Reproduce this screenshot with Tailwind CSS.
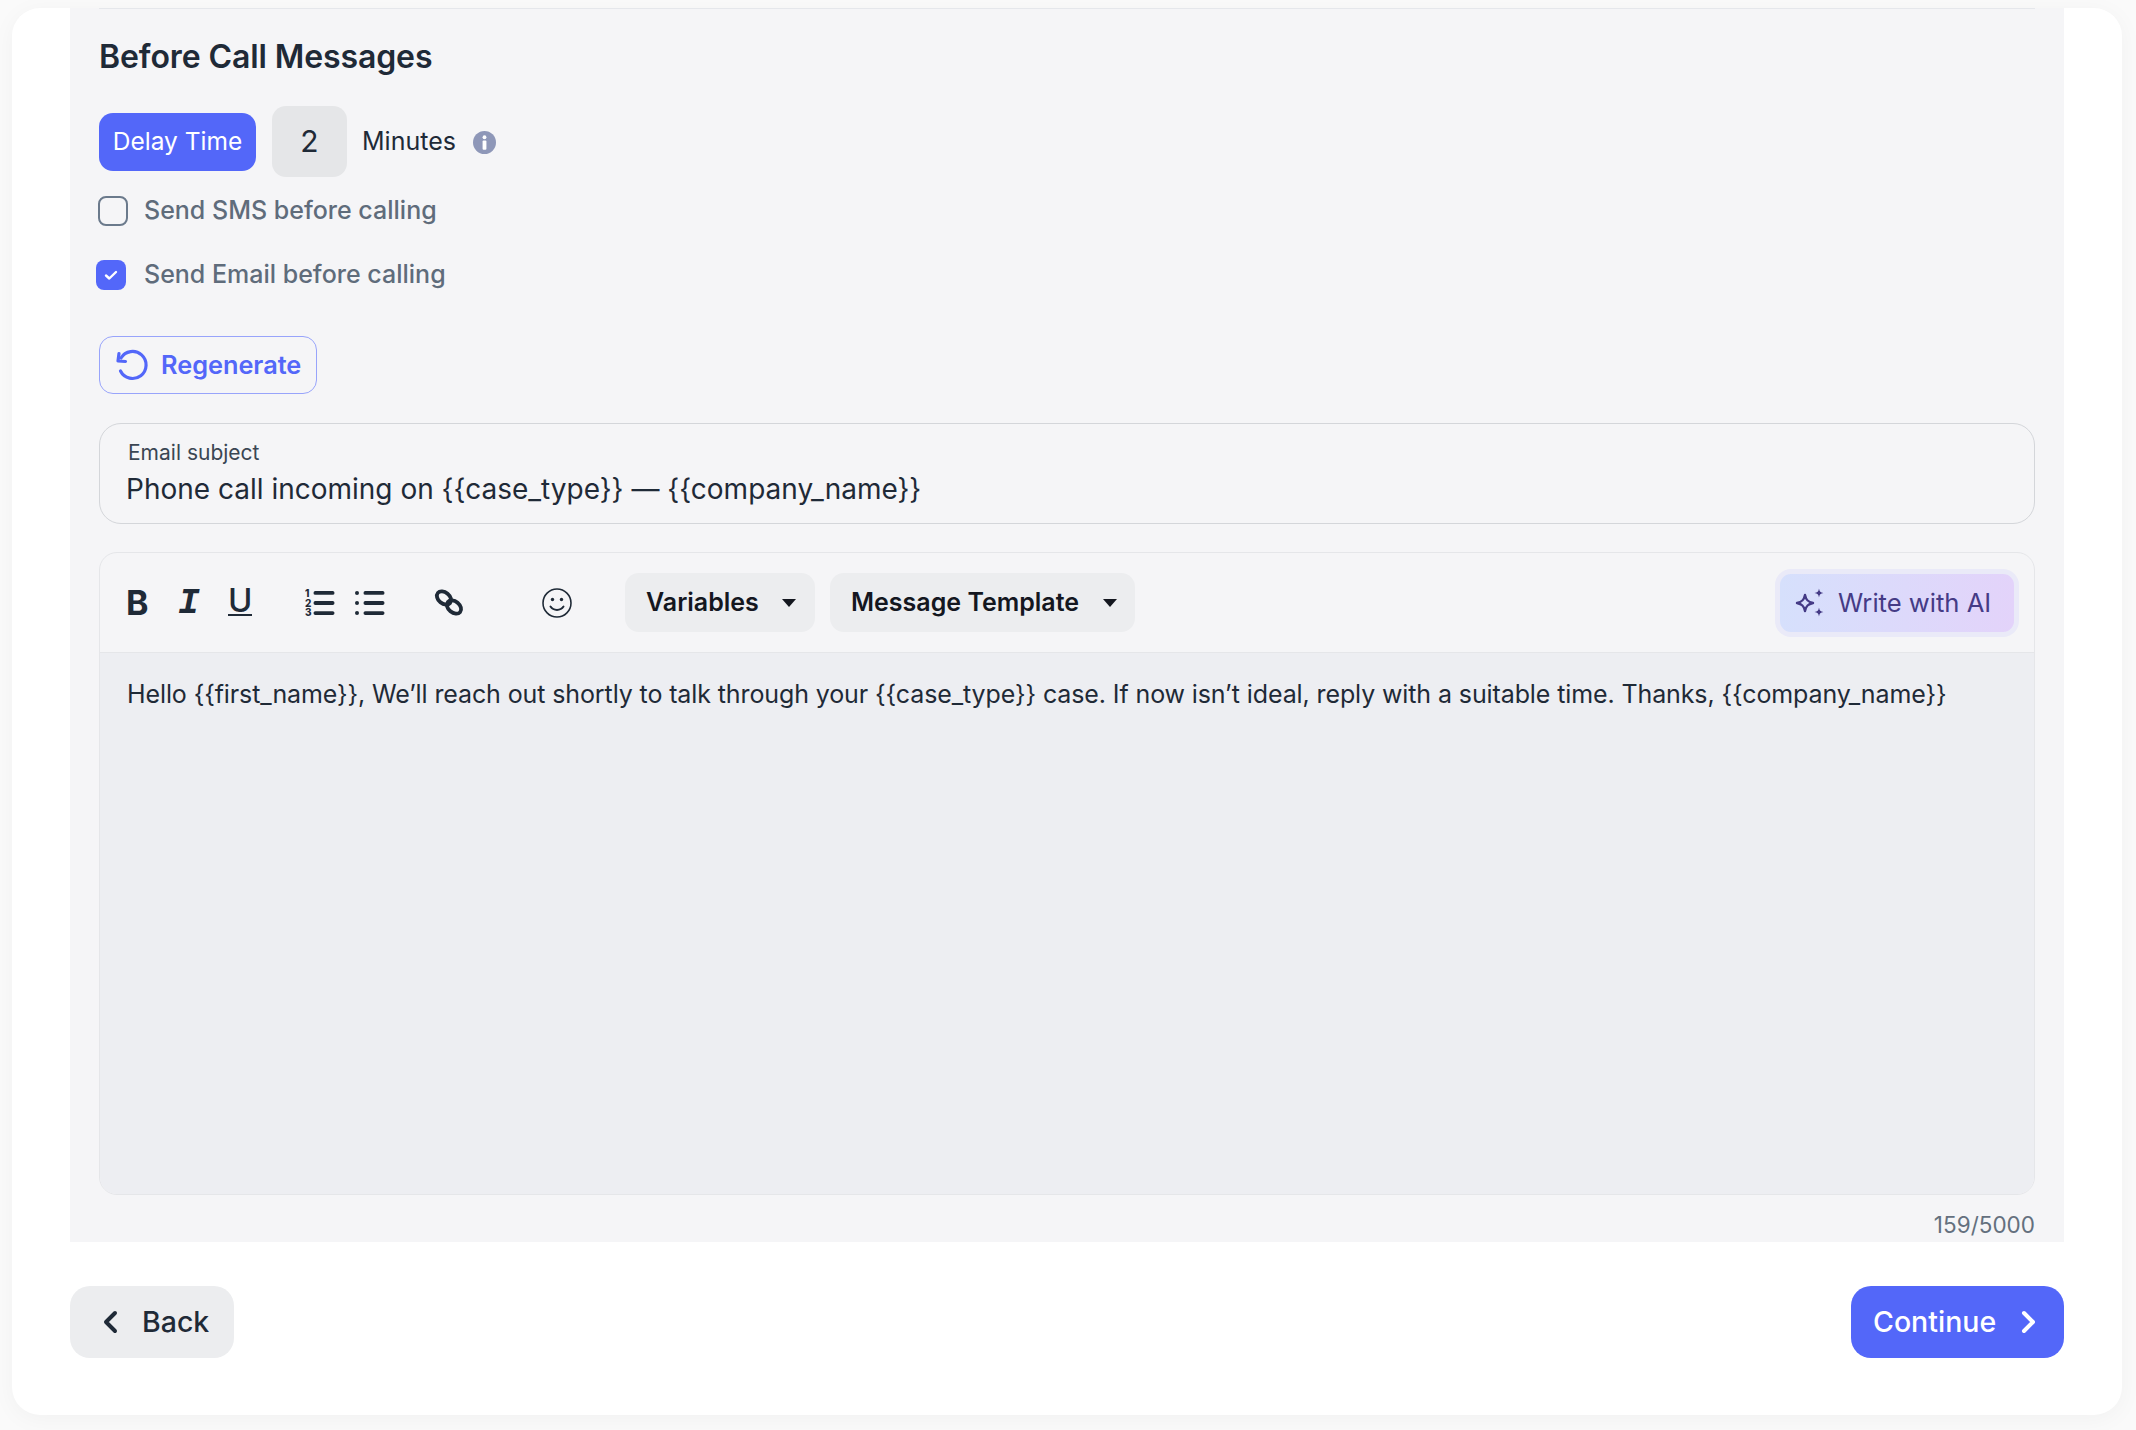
<!DOCTYPE html>
<html lang="en">
<head>
    <meta charset="UTF-8">
    <title>Before Call Messages</title>
    <script src="https://cdn.jsdelivr.net/npm/@tailwindcss/browser@4"></script>
</head>
<body class="bg-[#fafafa] h-[1430px] overflow-hidden pt-2 pl-3 font-['Inter',sans-serif]">
    <div class="w-[2110px] h-[1407px] bg-white rounded-[28px] shadow-[0_4px_24px_rgba(0,0,0,0.04)] overflow-hidden px-[58px] flex flex-col">
        <!-- panel -->
        <div class="h-[1234px] bg-[#f5f5f7] px-[29px]">
            <div class="border-t border-[#e5e7eb] h-full">
                <h2 class="mt-[30px] h-[36px] text-[32px] leading-[36px] font-semibold text-[#1f2a37] tracking-[-0.1px]">Before Call Messages</h2>

                <!-- delay row -->
                <div class="mt-[31px] flex items-center h-[71px]">
                    <div class="w-[157px] h-[58px] rounded-[14px] bg-[#5367f9] text-white text-[24.5px] flex items-center justify-center">Delay Time</div>
                    <div class="ml-[16px] w-[75px] h-[71px] rounded-[14px] bg-[#e5e6e8] text-[#1f2a37] text-[30px] flex items-center justify-center">2</div>
                    <span class="ml-[15px] text-[25px] text-[#1f2a37]">Minutes</span>
                    <svg class="ml-[17px] mt-[2px]" width="23" height="23" viewBox="0 0 24 24"><circle cx="12" cy="12" r="12" fill="#8e97b8"/><circle cx="12" cy="6.500" r="2" fill="#fff"/><rect x="10" y="10" width="4" height="9.500" rx="1" fill="#fff"/></svg>
                </div>

                <!-- checkboxes -->
                <div class="mt-[19px] flex items-center h-[29px]">
                    <div class="w-[30px] h-[30px] rounded-[8px] border-2 border-[#6b7a8c] -ml-px"></div>
                    <span class="ml-[16px] text-[25px] font-medium text-[#5f6c7b]">Send SMS before calling</span>
                </div>
                <div class="mt-[35px] flex items-center h-[29px]">
                    <div class="w-[30px] h-[30px] rounded-[8px] bg-[#5367f9] -ml-[3px] flex items-center justify-center">
                        <svg width="16" height="16" viewBox="0 0 16 16" fill="none" stroke="#fff" stroke-width="2.400" stroke-linecap="round" stroke-linejoin="round"><path d="M3 8.500l3.300 3L13 5"/></svg>
                    </div>
                    <span class="ml-[18px] text-[25px] font-medium text-[#5f6c7b]">Send Email before calling</span>
                </div>

                <!-- regenerate -->
                <button class="mt-[47px] w-[218px] h-[58px] rounded-[14px] border border-[#98a4fb] flex items-center pl-[15px] text-[#5367f9] text-[25.300px] font-semibold">
                    <svg width="34" height="34" viewBox="0 0 34 34" fill="none" stroke="#5367f9" stroke-width="3.200" stroke-linecap="round" stroke-linejoin="round"><path d="M6 10A13.500 13.500 0 1 1 5.500 23"/><path d="M4 5.500L3 13l7.500 .5"/></svg>
                    <span class="ml-[12px]">Regenerate</span>
                </button>

                <!-- subject -->
                <div class="mt-[29px] h-[101px] rounded-[22px] border border-[#d4d6da] pl-[26px] pt-[16px]">
                    <div class="text-[21px] leading-[26px] pl-[2px] text-[#3a4653]">Email subject</div>
                    <div class="text-[28px] leading-[38px] mt-[4px] text-[#1f2a37]">Phone call incoming on {{case_type}} — {{company_name}}</div>
                </div>

                <!-- editor -->
                <div class="mt-[28px] h-[643px] rounded-[18px] border border-[#e5e6e9] overflow-hidden flex flex-col">
                    <div class="h-[100px] shrink-0 border-b border-[#e5e6e9] flex items-center">
                        <span class="ml-[26px] w-[24px] text-[34px] font-bold leading-none text-[#1f2a37]">B</span>
                        <span class="ml-[28px] mt-[3px] w-[22px] text-[36px] font-bold italic leading-none text-[#1f2a37] font-['Liberation_Mono',monospace]">I</span>
                        <span class="ml-[28px] -mt-[3px] w-[24px] text-[33px] font-medium leading-[27px] text-center text-[#1f2a37] border-b-2 border-[#1f2a37]">U</span>
                        <svg class="ml-[53px]" width="30" height="30" viewBox="0 0 30 30" fill="#1f2a37" font-family="Inter" font-size="10" font-weight="800"><text x="0" y="9">1</text><text x="0" y="18.500">2</text><text x="0" y="28">3</text><rect x="8.500" y="3" width="21" height="3.800" rx="1.900"/><rect x="8.500" y="13.100" width="21" height="3.800" rx="1.900"/><rect x="8.500" y="23.200" width="21" height="3.800" rx="1.900"/></svg>
                        <svg class="ml-[20px]" width="30" height="30" viewBox="0 0 30 30" fill="#1f2a37"><circle cx="2" cy="4.900" r="2"/><circle cx="2" cy="15" r="2"/><circle cx="2" cy="25.100" r="2"/><rect x="8.500" y="3" width="21" height="3.800" rx="1.900"/><rect x="8.500" y="13.100" width="21" height="3.800" rx="1.900"/><rect x="8.500" y="23.200" width="21" height="3.800" rx="1.900"/></svg>
                        <svg class="ml-[49px]" width="30" height="30" viewBox="0 0 30 30" fill="none" stroke="#1f2a37" stroke-width="3.800"><ellipse cx="10" cy="10" rx="8" ry="5.600" transform="rotate(40 10 10)"/><ellipse cx="20" cy="19" rx="8" ry="5.600" transform="rotate(40 20 19)"/></svg>
                        <svg class="ml-[78px]" width="30" height="30" viewBox="0 0 30 30" fill="none" stroke="#1f2a37" stroke-width="1.600" stroke-linecap="round"><circle cx="15" cy="15" r="14"/><circle cx="10.500" cy="11.500" r="1.700" fill="#1f2a37" stroke="none"/><circle cx="19.500" cy="11.500" r="1.700" fill="#1f2a37" stroke="none"/><path d="M8.500 18.500c3 4.500 10 4.500 13 0" stroke-width="2"/></svg>
                        <button class="ml-[53px] w-[190px] h-[59px] rounded-[14px] bg-[#ecedef] flex items-center pl-[21px] text-[25px] font-semibold text-[#14171f]">
                            Variables
                            <svg class="ml-[23px]" width="14" height="8" viewBox="0 0 14 8" fill="#14171f"><path d="M0 0h14L7 8z"/></svg>
                        </button>
                        <button class="ml-[15px] w-[305px] h-[59px] rounded-[14px] bg-[#ecedef] flex items-center pl-[21px] text-[25px] font-semibold text-[#14171f]">
                            Message Template
                            <svg class="ml-[24px]" width="14" height="8" viewBox="0 0 14 8" fill="#14171f"><path d="M0 0h14L7 8z"/></svg>
                        </button>
                        <button class="ml-auto mr-[15px] w-[244px] h-[68px] rounded-[16px] border-[5px] border-[#eaeaf8] bg-[linear-gradient(90deg,#d6e0fc,#e3d3fa)] flex items-center pl-[15px] text-[25.600px] text-[#453b86]">
                            <svg width="30" height="30" viewBox="0 0 30 30" fill="none"><path d="M10 7c1 5 3 7 8 8-5 1-7 3-8 8-1-5-3-7-8-8 5-1 7-3 8-8z" stroke="#453b86" stroke-width="2.400" stroke-linejoin="round"/><path d="M24 .5c.5 3 1.500 4 4.500 4.500-3 .5-4 1.500-4.500 4.500-.5-3-1.500-4-4.500-4.500 3-.5 4-1.500 4.500-4.500zM24 19.500c.5 3 1.500 4 4.500 4.500-3 .5-4 1.500-4.500 4.500-.5-3-1.500-4-4.500-4.500 3-.5 4-1.500 4.500-4.500z" fill="#453b86"/></svg>
                            <span class="ml-[13px] mt-[1px]">Write with AI</span>
                        </button>
                    </div>
                    <div class="grow bg-[#edeef2] pl-[27px] pt-[25px] text-[25px] tracking-[-0.11px] leading-[32px] text-[#1f2a37]">Hello {{first_name}}, We’ll reach out shortly to talk through your {{case_type}} case. If now isn’t ideal, reply with a suitable time. Thanks, {{company_name}}</div>
                </div>
                <div class="mt-[16px] text-right text-[22.500px] leading-[28px] text-[#64707e]">159/5000</div>
            </div>
        </div>

        <!-- footer -->
        <div class="mt-[44px] flex justify-between">
            <button class="w-[164px] h-[72px] rounded-[20px] bg-[#ecedef] flex items-center pl-[32px] text-[28.500px] font-medium text-[#1f2a37]">
                <svg width="16" height="24" viewBox="0 0 16 24" fill="none" stroke="#1f2a37" stroke-width="4" stroke-linecap="round" stroke-linejoin="round"><path d="M13 3l-9 9 9 9"/></svg>
                <span class="ml-[24px]">Back</span>
            </button>
            <button class="w-[213px] h-[72px] rounded-[20px] bg-[#5367f9] flex items-center pl-[22px] text-[28.500px] font-medium text-white">
                Continue
                <svg class="ml-[25px]" width="16" height="24" viewBox="0 0 16 24" fill="none" stroke="#fff" stroke-width="4" stroke-linecap="round" stroke-linejoin="round"><path d="M3 3l9 9-9 9"/></svg>
            </button>
        </div>
    </div>
</body>
</html>
